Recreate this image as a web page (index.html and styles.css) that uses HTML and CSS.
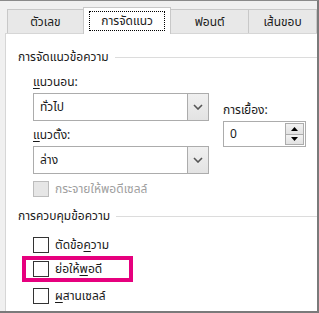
FILE: index.html
```html
<!DOCTYPE html>
<html lang="th">
<head>
<meta charset="utf-8">
<link rel="stylesheet" href="styles.css">
</head>
<body>
<div class="win">
  <div class="tabs">
    <div class="tab t1">ตัวเลข</div>
    <div class="tab active"><span class="focus">การจัดแนว</span></div>
    <div class="tab t3">ฟอนต์</div>
    <div class="tab t4">เส้นขอบ</div>
  </div>
  <div class="panel">
    <div class="group"><span class="gtitle">การจัดแนวข้อความ</span><span class="rule"></span></div>
    <div class="align-row">
      <div class="left">
        <div class="label"><u>แ</u>นวนอน:</div>
        <div class="select"><span class="val">ทั่วไป</span><span class="dd"><svg width="10" height="6" viewBox="0 0 10 6"><path d="M1 1 L5 5 L9 1" fill="none" stroke="#555" stroke-width="1.6"/></svg></span></div>
        <div class="label l2"><u>แ</u>นวตั้ง:</div>
        <div class="select"><span class="val">ล่าง</span><span class="dd"><svg width="10" height="6" viewBox="0 0 10 6"><path d="M1 1 L5 5 L9 1" fill="none" stroke="#555" stroke-width="1.6"/></svg></span></div>
        <div class="check disabled"><span class="box"></span><span>กระจายให้พอดีเซลล์</span></div>
      </div>
      <div class="right">
        <div class="label">การเยื้อง:</div>
        <div class="spin"><span class="num">0</span>
          <span class="sbtns">
            <span class="sb"><svg width="7" height="4" viewBox="0 0 7 4"><path d="M0 4 L3.5 0 L7 4 Z" fill="#000"/></svg></span>
            <span class="sb"><svg width="7" height="4" viewBox="0 0 7 4"><path d="M0 0 L3.5 4 L7 0 Z" fill="#000"/></svg></span>
          </span>
        </div>
      </div>
    </div>
    <div class="group g2"><span class="gtitle">การควบคุมข้อความ</span><span class="rule"></span></div>
    <div class="checks">
      <div class="check"><span class="box"></span><span>ตัดข้อ<u>ค</u>วาม</span></div>
      <div class="hl"><div class="check"><span class="box"></span><span>ย่อให้<u>พ</u>อดี</span></div></div>
      <div class="check last"><span class="box"></span><span><u>ผ</u>สานเซลล์</span></div>
    </div>
  </div>
</div>
</body>
</html>
```
FILE: styles.css
```css
* { box-sizing: border-box; }
html, body { margin: 0; padding: 0; background: #fff; }
body {
  font-family: Tahoma, "Leelawadee UI", "Noto Sans Thai", "Garuda", "Loma", "DejaVu Sans", sans-serif;
  font-size: 12px;
  color: #1a1a1a;
}
.win {
  width: 319px;
  height: 313px;
  background: #f0f0f0;
  border-top: 1px solid #8a8a8a;
  border-right: 2px solid #7a7a7a;
  border-bottom: 2px solid #7a7a7a;
  display: flex;
  flex-direction: column;
  overflow: hidden;
}
.tabs {
  display: flex;
  align-items: flex-end;
  height: 32px;
  padding-left: 7px;
  position: relative;
  z-index: 1;
}
.tab {
  height: 24px;
  display: flex;
  align-items: center;
  justify-content: center;
  background: #e8e8e8;
  border: 1px solid #c8c8c8;
  border-bottom: none;
  color: #1a1a1a;
}
.t1 { width: 78px; margin-right: -1px; }
.active {
  width: 90px;
  height: 27px;
  background: #fff;
  border-color: #c8c8c8;
  margin-bottom: -1px;
  z-index: 2;
  position: relative;
}
.focus {
  border: 1px dotted #000;
  padding: 1px 5px;
  width: 76px;
  height: 20px;
  display: flex;
  align-items: center;
  justify-content: center;
}
.t3 { width: 80px; margin-left: -1px; }
.t4 { width: 70px; margin-left: -1px; }
.panel {
  flex: 1;
  background: #fff;
  margin-left: 5px;
  border-top: 1px solid #d6d6d6;
  border-left: 1px solid #d6d6d6;
  padding: 15px 0 0 12px;
}
.group {
  display: flex;
  align-items: center;
  height: 16px;
}
.rule {
  flex: 1;
  border-top: 1px solid #dcdcdc;
  margin-left: 6px;
  margin-top: 1px;
}
.align-row {
  display: flex;
  padding-left: 15px;
  margin-top: 9px;
}
.left { width: 176px; }
.label { height: 16px; line-height: 16px; }
.select {
  margin-top: 3px;
  height: 28px;
  border: 1px solid #acacac;
  display: flex;
  align-items: stretch;
}
.val { flex: 1; padding-left: 6px; display: flex; align-items: center; }
.dd {
  width: 21px;
  background: linear-gradient(#f0f0f0, #e3e3e3);
  border-left: 1px solid #acacac;
  display: flex;
  align-items: center;
  justify-content: center;
}
.l2 { margin-top: 6px; }
.check {
  display: flex;
  align-items: center;
  height: 16px;
  gap: 6px;
}
.box {
  width: 16px;
  height: 16px;
  border: 1px solid #333;
  background: #fff;
}
.disabled { margin-top: 7px; color: #a0a0a0; }
.disabled .box { background: #e6e6e6; border-color: #bcbcbc; }
.right { margin-left: 14px; padding-top: 28px; }
.spin {
  margin-top: 3px;
  width: 83px;
  height: 26px;
  border: 1px solid #acacac;
  display: flex;
}
.num { flex: 1; padding-left: 6px; display: flex; align-items: center; }
.sbtns {
  display: flex;
  flex-direction: column;
  padding: 1px 1px 1px 0;
}
.sb {
  width: 19px;
  flex: 1;
  background: linear-gradient(#f2f2f2, #e2e2e2);
  border: 1px solid #acacac;
  display: flex;
  align-items: center;
  justify-content: center;
}
.sb + .sb { border-top: none; }
.g2 { margin-top: 11px; }
.checks { padding-left: 15px; margin-top: 13px; display: flex; flex-direction: column; align-items: flex-start; }
.hl {
  border: 4px solid #e6007e;
  margin-left: -11px;
  margin-top: 3px;
  padding: 1px 10px 1px 7px;
  width: 111px;
}
.last { margin-top: 6px; }
u { text-decoration-thickness: 1px; text-underline-offset: 2px; }
```
